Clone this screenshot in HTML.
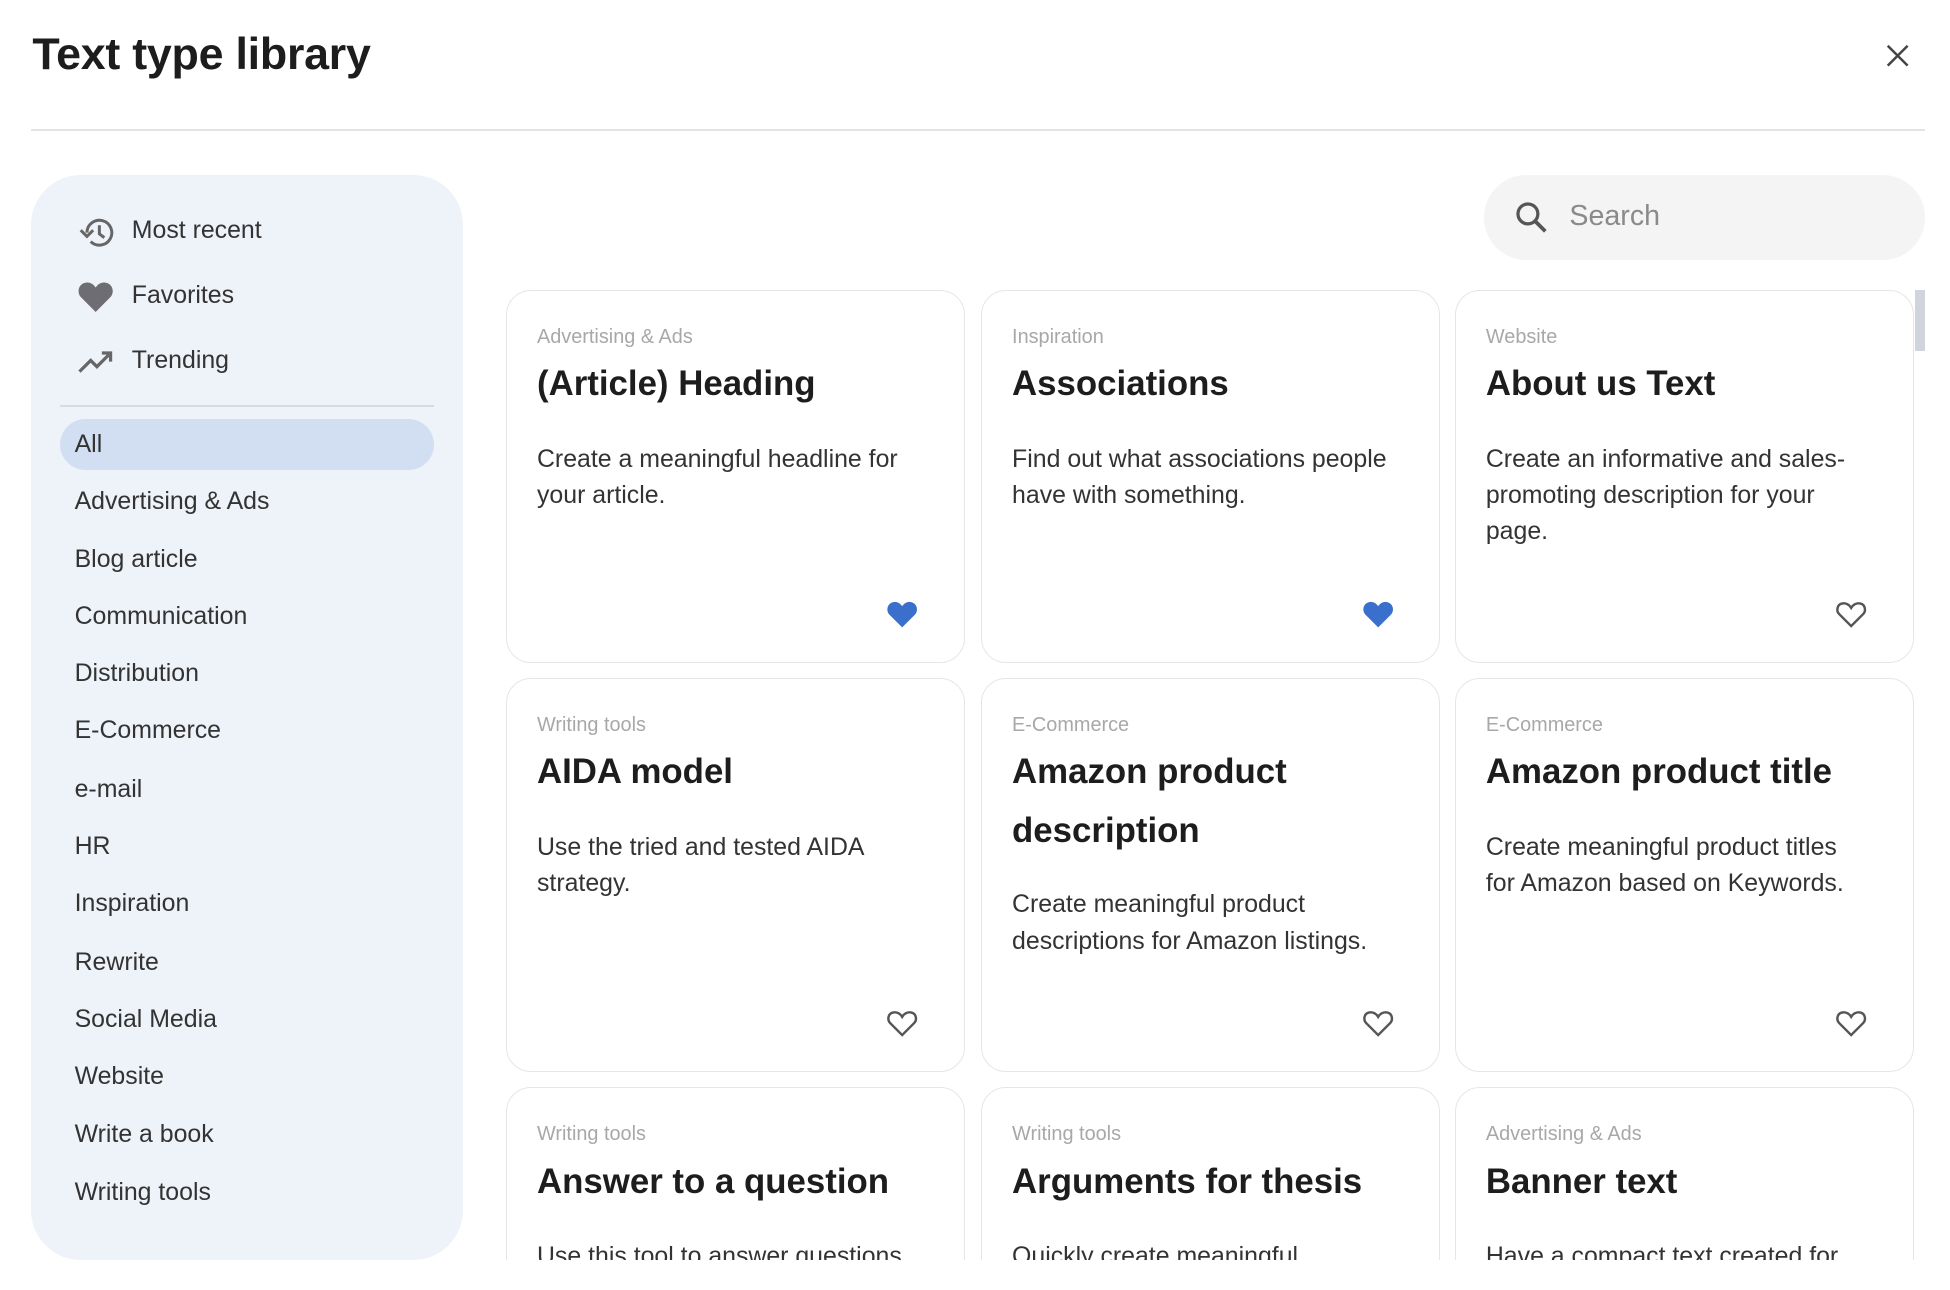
<!DOCTYPE html>
<html><head><meta charset="utf-8"><style>
html{margin:0;padding:0;background:#fff;height:1290px;overflow:hidden;}
body{margin:0;padding:0;background:#fff;width:1568px;height:1037px;zoom:1.24362;font-family:"Liberation Sans",sans-serif;color:#222;position:relative;overflow:hidden;}
.title{position:absolute;left:26px;top:23px;font-size:36px;font-weight:bold;color:#1d1d1d;letter-spacing:-0.2px;}
.close{position:absolute;left:1515px;top:34px;}
.div{position:absolute;left:25px;top:104px;width:1523px;height:1px;background:#e4e4e4;}
.side{position:absolute;left:25px;top:141px;width:347px;height:872px;background:#eef2f9;border-radius:40px;}
.it{position:absolute;left:81px;font-size:20px;color:#333;}
.ic{position:absolute;left:37px;}
.sep{position:absolute;left:23px;top:185px;width:301px;height:1px;background:#d6dbe3;}
.pill{position:absolute;left:23px;top:196px;width:301px;height:41px;background:#d2dff2;border-radius:21px;}
.cat{position:absolute;left:35px;font-size:20px;color:#333;line-height:24px;}
.search{position:absolute;left:1193px;top:141px;width:355px;height:68px;background:#f4f4f4;border-radius:34px;}
.search span{position:absolute;left:69px;top:20px;font-size:23px;color:#8a8a8a;}
.clip{position:absolute;left:400px;top:225px;width:1150px;height:788px;overflow:hidden;}
.card{position:absolute;width:369px;border:1px solid #e6e6e6;border-radius:20px;background:#fff;box-sizing:border-box;}
.card .c{position:absolute;left:24px;top:28px;font-size:16px;color:#a8a8a8;}
.card .t{position:absolute;left:24px;top:52px;font-size:28px;font-weight:bold;color:#1d1d1d;line-height:47px;width:330px;}
.card .d{position:absolute;left:24px;font-size:20px;color:#333;line-height:29px;width:310px;}
.card svg.h{position:absolute;left:305px;}
.sb{position:absolute;left:1540px;top:233px;width:8px;height:49px;background:#d0d4dc;}
</style></head><body>
<div class="title">Text type library</div>
<svg class="close" width="22" height="22" viewBox="0 0 22 22"><path d="M3 3L19 19M19 3L3 19" stroke="#444" stroke-width="2"/></svg>
<div class="div"></div>
<div class="side">
 <svg class="ic" style="top:31px" width="32" height="30" viewBox="0 0 32 30"><path d="M8 15a10 10 0 1 1 3 7.2" fill="none" stroke="#666" stroke-width="2.4"/><path d="M3 13l5 5 5-5" fill="none" stroke="#666" stroke-width="2.4"/><path d="M18 9v7l4 3" fill="none" stroke="#666" stroke-width="2.4"/></svg>
 <div class="it" style="top:33px">Most recent</div>
 <svg class="ic" style="top:83px" width="30" height="28" viewBox="0 0 24 22"><path d="M12 21L2.5 11.5C0 9 0.5 3.5 5 2.3 8 1.5 10.5 3 12 5.3 13.5 3 16 1.5 19 2.3 23.5 3.5 24 9 21.5 11.5Z" fill="#6d6d72"/></svg>
 <div class="it" style="top:85px">Favorites</div>
 <svg class="ic" style="top:139px" width="30" height="22" viewBox="0 0 30 22"><path d="M2 19L11 10l5 5 11-11M20 4h7v7" fill="none" stroke="#666" stroke-width="2.6"/></svg>
 <div class="it" style="top:137px">Trending</div>
 <div class="sep"></div>
 <div class="pill"></div>
 <div class="cat" style="top:205px">All</div>
 <div class="cat" style="top:251px">Advertising &amp; Ads</div>
 <div class="cat" style="top:297px">Blog article</div>
 <div class="cat" style="top:343px">Communication</div>
 <div class="cat" style="top:389px">Distribution</div>
 <div class="cat" style="top:435px">E-Commerce</div>
 <div class="cat" style="top:482px">e-mail</div>
 <div class="cat" style="top:528px">HR</div>
 <div class="cat" style="top:574px">Inspiration</div>
 <div class="cat" style="top:621px">Rewrite</div>
 <div class="cat" style="top:667px">Social Media</div>
 <div class="cat" style="top:713px">Website</div>
 <div class="cat" style="top:760px">Write a book</div>
 <div class="cat" style="top:806px">Writing tools</div>
</div>
<div class="search"><svg style="position:absolute;left:24px;top:19px" width="30" height="30" viewBox="0 0 30 30"><circle cx="12" cy="12" r="8" fill="none" stroke="#555" stroke-width="2.6"/><path d="M18 18l8 8" stroke="#555" stroke-width="3"/></svg><span>Search</span></div>
<div class="clip">
 <div class="card" style="left:7px;top:8px;height:300px"><div class="c">Advertising &amp; Ads</div><div class="t">(Article) Heading</div><div class="d" style="top:121px">Create a meaningful headline for your article.</div><svg class="h" style="top:248px" width="26" height="24" viewBox="0 0 24 22"><path d="M12 21L2.5 11.5C0 9 0.5 3.5 5 2.3 8 1.5 10.5 3 12 5.3 13.5 3 16 1.5 19 2.3 23.5 3.5 24 9 21.5 11.5Z" fill="#3a6fcc"/></svg></div>
 <div class="card" style="left:389px;top:8px;height:300px"><div class="c">Inspiration</div><div class="t">Associations</div><div class="d" style="top:121px">Find out what associations people have with something.</div><svg class="h" style="top:248px" width="26" height="24" viewBox="0 0 24 22"><path d="M12 21L2.5 11.5C0 9 0.5 3.5 5 2.3 8 1.5 10.5 3 12 5.3 13.5 3 16 1.5 19 2.3 23.5 3.5 24 9 21.5 11.5Z" fill="#3a6fcc"/></svg></div>
 <div class="card" style="left:770px;top:8px;height:300px"><div class="c">Website</div><div class="t">About us Text</div><div class="d" style="top:121px">Create an informative and sales-promoting description for your page.</div><svg class="h" style="top:248px" width="26" height="24" viewBox="0 0 24 22"><path d="M12 20L3 11C1 9 1.3 4.3 5 3.3 7.8 2.6 10.5 4 12 6.5 13.5 4 16.2 2.6 19 3.3 22.7 4.3 23 9 21 11Z" fill="none" stroke="#555" stroke-width="1.8"/></svg></div>
 <div class="card" style="left:7px;top:320px;height:317px"><div class="c">Writing tools</div><div class="t">AIDA model</div><div class="d" style="top:121px">Use the tried and tested AIDA strategy.</div><svg class="h" style="top:265px" width="26" height="24" viewBox="0 0 24 22"><path d="M12 20L3 11C1 9 1.3 4.3 5 3.3 7.8 2.6 10.5 4 12 6.5 13.5 4 16.2 2.6 19 3.3 22.7 4.3 23 9 21 11Z" fill="none" stroke="#555" stroke-width="1.8"/></svg></div>
 <div class="card" style="left:389px;top:320px;height:317px"><div class="c">E-Commerce</div><div class="t">Amazon product description</div><div class="d" style="top:167px">Create meaningful product descriptions for Amazon listings.</div><svg class="h" style="top:265px" width="26" height="24" viewBox="0 0 24 22"><path d="M12 20L3 11C1 9 1.3 4.3 5 3.3 7.8 2.6 10.5 4 12 6.5 13.5 4 16.2 2.6 19 3.3 22.7 4.3 23 9 21 11Z" fill="none" stroke="#555" stroke-width="1.8"/></svg></div>
 <div class="card" style="left:770px;top:320px;height:317px"><div class="c">E-Commerce</div><div class="t">Amazon product title</div><div class="d" style="top:121px">Create meaningful product titles for Amazon based on Keywords.</div><svg class="h" style="top:265px" width="26" height="24" viewBox="0 0 24 22"><path d="M12 20L3 11C1 9 1.3 4.3 5 3.3 7.8 2.6 10.5 4 12 6.5 13.5 4 16.2 2.6 19 3.3 22.7 4.3 23 9 21 11Z" fill="none" stroke="#555" stroke-width="1.8"/></svg></div>
 <div class="card" style="left:7px;top:649px;height:300px"><div class="c">Writing tools</div><div class="t">Answer to a question</div><div class="d" style="top:121px">Use this tool to answer questions.</div></div>
 <div class="card" style="left:389px;top:649px;height:300px"><div class="c">Writing tools</div><div class="t">Arguments for thesis</div><div class="d" style="top:121px">Quickly create meaningful arguments.</div></div>
 <div class="card" style="left:770px;top:649px;height:300px"><div class="c">Advertising &amp; Ads</div><div class="t">Banner text</div><div class="d" style="top:121px">Have a compact text created for your banner.</div></div>
</div>
<div class="sb"></div>
</body></html>
